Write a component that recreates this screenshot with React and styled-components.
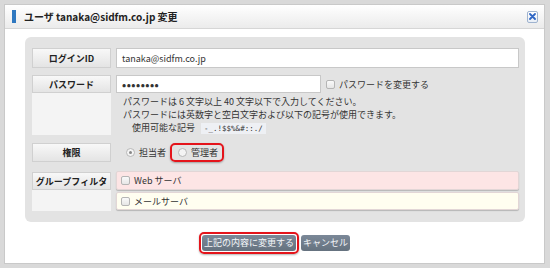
import React from "react";
import styled, { createGlobalStyle } from "styled-components";

const Global = createGlobalStyle`
  body {
    margin: 0;
    background: #d9d9d9;
    font-family: "Noto Sans CJK JP", "Noto Sans", sans-serif;
    color: #333;
  }
`;

const Frame = styled.div`
  padding: 4px;
`;

const Dialog = styled.div`
  box-sizing: border-box;
  width: 541px;
  height: 260px;
  background: #fff;
  border: 1px solid #c9c9c9;
  display: flex;
  flex-direction: column;
`;

const TitleBar = styled.div`
  height: 23px;
  display: flex;
  align-items: center;
  padding: 0 6px 0 7px;
  background: linear-gradient(#ffffff, #ebebeb);
  border-bottom: 1px solid #d6d6d6;
`;

const Mark = styled.span`
  width: 4px;
  height: 13px;
  background: #2f78c0;
  margin-right: 8px;
`;

const Title = styled.h1`
  flex: 1;
  margin: 0;
  font-size: 10px;
  font-weight: bold;
  color: #222;
`;

const CloseButton = styled.button`
  box-sizing: border-box;
  width: 11px;
  height: 12px;
  padding: 0;
  border: 1px solid #9fb3cf;
  border-radius: 2px;
  background: linear-gradient(#ffffff, #e8eef6);
  display: flex;
  align-items: center;
  justify-content: center;
`;

const Panel = styled.div`
  margin: 8px 19px 0 20px;
  padding: 11px 6px 11px 7px;
  background: #e3e3e3;
  border-radius: 6px;
  display: flex;
  flex-direction: column;
`;

const Row = styled.div`
  display: grid;
  grid-template-columns: 79px 1fr;
  column-gap: 5px;
  height: ${(p) => p.$h}px;
  margin-top: ${(p) => p.$top || 0}px;
`;

const Label = styled.div`
  box-sizing: border-box;
  display: flex;
  align-items: center;
  justify-content: center;
  font-size: 9px;
  font-weight: bold;
  color: #222;
  background: ${(p) => (p.$blank ? "#f4f4f4" : "linear-gradient(#f8f8f8, #e4e4e4)")};
  border: ${(p) => (p.$blank ? "none" : "1px solid #d0d0d0")};
`;

const Input = styled.div`
  box-sizing: border-box;
  width: ${(p) => p.$w || "100%"};
  height: 100%;
  background: #fff;
  border: 1px solid #c8c8c8;
  display: flex;
  align-items: center;
  padding-left: 5px;
  font-size: ${(p) => (p.$dots ? "11px" : "9px")};
  color: #333;
  font-weight: ${(p) => (p.$dots ? "bold" : "normal")};
  letter-spacing: ${(p) => (p.$dots ? "0.5px" : "0")};
`;

const Inline = styled.div`
  display: flex;
  align-items: center;
  gap: ${(p) => p.$gap || 0}px;
  padding-left: ${(p) => p.$pad || 0}px;
  font-size: 9px;
`;

const Check = styled.span`
  box-sizing: border-box;
  width: 9px;
  height: 9px;
  border: 1px solid #b5b5b5;
  border-radius: 2px;
  background: linear-gradient(#fafafa, #e6e6e6);
  margin-right: 4px;
`;

const Radio = styled.span`
  box-sizing: border-box;
  width: 9px;
  height: 9px;
  border: 1px solid #b8b8b8;
  border-radius: 50%;
  background: #f4f4f4;
  margin-right: 4px;
  display: flex;
  align-items: center;
  justify-content: center;

  &::after {
    content: "";
    width: 3px;
    height: 3px;
    border-radius: 50%;
    background: ${(p) => (p.$on ? "#888" : "transparent")};
  }
`;

const Help = styled.div`
  padding: 2px 0 0 7px;
  font-size: 9px;
  line-height: 13px;
  color: #333;
`;

const Indent = styled.div`
  padding-left: 9px;
`;

const Code = styled.code`
  font-family: "DejaVu Sans Mono", monospace;
  font-size: 7.5px;
  background: #eef0f4;
  padding: 1px 3px;
  margin-left: 6px;
`;

const Highlight = styled.span`
  display: inline-flex;
  align-items: center;
  border: 2px solid #e4141b;
  border-radius: 5px;
  padding: ${(p) => p.$pad || "0"};
  box-shadow: 0 1px 2px rgba(0, 0, 0, 0.3);
`;

const Choice = styled.label`
  display: flex;
  align-items: center;
  margin-right: ${(p) => p.$gap || 0}px;
`;

const FilterBox = styled.div`
  box-sizing: border-box;
  height: ${(p) => p.$h}px;
  margin-top: ${(p) => p.$top || 0}px;
  background: ${(p) => p.$bg};
  border: 1px solid #e2d6d6;
  border-radius: 2px;
  box-shadow: 0 1px 1px rgba(0, 0, 0, 0.2);
  display: flex;
  align-items: center;
  padding-left: 4px;
  font-size: 9px;
  color: #333;
`;

const Actions = styled.div`
  display: flex;
  justify-content: center;
  align-items: center;
  gap: 2px;
  margin-top: 10px;
`;

const Button = styled.button`
  height: 16px;
  padding: 0 2px;
  border: none;
  border-radius: 3px;
  background: linear-gradient(#7b8898, #65727f);
  color: #f4f6f8;
  font-family: "Noto Sans CJK JP", sans-serif;
  font-size: 9px;
  line-height: 16px;
`;

export default function App() {
  return (
    <>
      <Global />
      <Frame>
        <Dialog>
          <TitleBar>
            <Mark />
            <Title>ユーザ tanaka@sidfm.co.jp 変更</Title>
            <CloseButton aria-label="close">
              <svg width="7" height="7" viewBox="0 0 7 7">
                <path d="M1 1L6 6M6 1L1 6" stroke="#2f66c4" strokeWidth="1.8" strokeLinecap="round" />
              </svg>
            </CloseButton>
          </TitleBar>
          <Panel>
            <Row $h={20}>
              <Label>ログインID</Label>
              <Input>tanaka@sidfm.co.jp</Input>
            </Row>
            <Row $h={18} $top={7}>
              <Label>パスワード</Label>
              <Inline $gap={5}>
                <Input $w="205px" $dots>••••••••</Input>
                <Inline>
                  <Check />
                  パスワードを変更する
                </Inline>
              </Inline>
            </Row>
            <Row $h={42}>
              <Label $blank />
              <Help>
                <div>パスワードは 6 文字以上 40 文字以下で入力してください。</div>
                <div>パスワードには英数字と空白文字および以下の記号が使用できます。</div>
                <Indent>
                  使用可能な記号<Code>-_.!$$%&amp;#::./</Code>
                </Indent>
              </Help>
            </Row>
            <Row $h={18} $top={8}>
              <Label>権限</Label>
              <Inline $pad={10}>
                <Choice $gap={4}>
                  <Radio $on />
                  担当者
                </Choice>
                <Highlight $pad="1px 4px 1px 6px">
                  <Choice>
                    <Radio />
                    管理者
                  </Choice>
                </Highlight>
              </Inline>
            </Row>
            <Row $h={18} $top={11}>
              <Label>グループフィルタ</Label>
              <FilterBox $h={19} $top={-1} $bg="#fde5e5">
                <Check />
                Web サーバ
              </FilterBox>
            </Row>
            <Row $h={21}>
              <Label $blank />
              <FilterBox $h={18} $top={2} $bg="#fffef0">
                <Check />
                メールサーバ
              </FilterBox>
            </Row>
          </Panel>
          <Actions>
            <Highlight $pad="1px">
              <Button>上記の内容に変更する</Button>
            </Highlight>
            <Button>キャンセル</Button>
          </Actions>
        </Dialog>
      </Frame>
    </>
  );
}
